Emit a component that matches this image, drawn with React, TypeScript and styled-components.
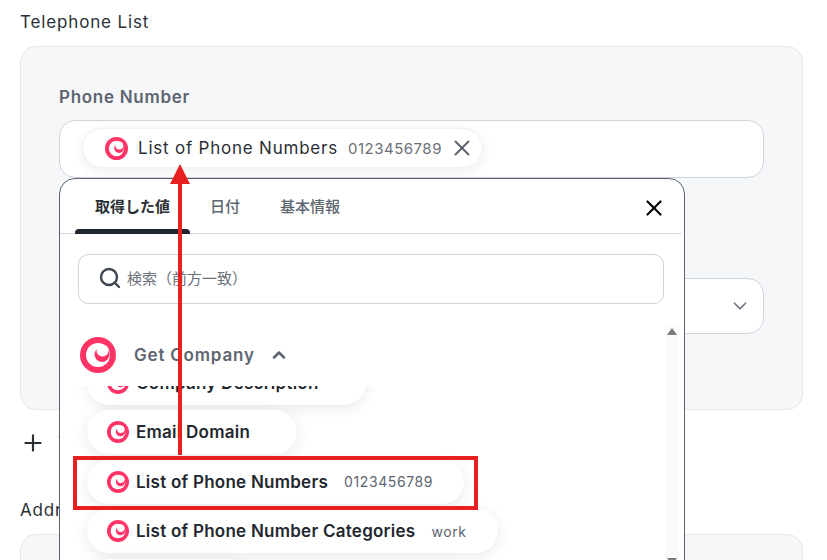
import React from 'react';
import styled, { createGlobalStyle } from 'styled-components';
import { ChevronDown, ChevronUp, Plus, Search, X } from 'lucide-react';

const GlobalStyle = createGlobalStyle`
  html, body {
    margin: 0;
    background: #fff;
  }
  body {
    font-family: Inter, "Noto Sans CJK JP", sans-serif;
    color: #23272e;
  }
  * {
    box-sizing: border-box;
  }
`;

const Page = styled.div`
  position: relative;
  width: 827px;
  height: 560px;
  overflow: hidden;
  padding: 12px 24px 0 20px;
`;

const SectionTitle = styled.div`
  font-size: 17px;
  line-height: 20px;
  letter-spacing: 0.85px;
  color: #2b2f36;
  height: 34px;
`;

const Panel = styled.div<{ $height: number }>`
  height: ${p => p.$height}px;
  background: #f6f7f9;
  border: 1px solid #e5e7eb;
  border-radius: 16px;
  padding: 40px 38px 0;
`;

const FieldLabel = styled.div`
  font-size: 17px;
  font-weight: 600;
  line-height: 20px;
  letter-spacing: 0.7px;
  color: #5d6570;
  height: 33px;
`;

const InputBox = styled.div`
  height: 58px;
  background: #fff;
  border: 1px solid #ced4dc;
  border-radius: 16px;
  padding: 7px 22px;
`;

const SelectBox = styled.div`
  height: 56px;
  margin-top: 100px;
  background: #fff;
  border: 1px solid #ced4dc;
  border-radius: 16px;
  display: flex;
  align-items: center;
  justify-content: flex-end;
  padding-right: 12px;
  color: #6b7078;
`;

const SelectedChip = styled.div`
  display: inline-flex;
  align-items: center;
  height: 40px;
  padding: 0 7px 0 22px;
  background: #fff;
  border: 1px solid #eef0f2;
  border-radius: 20px;
  box-shadow: 0 3px 12px rgba(30, 40, 60, 0.08);
  color: #5d6570;
`;

const SelectedName = styled.span`
  font-size: 17px;
  letter-spacing: 0.78px;
  color: #2b2f36;
  margin: 0 10px 0 10px;
  white-space: nowrap;
`;

const SelectedValue = styled.span`
  font-size: 15px;
  letter-spacing: 0.5px;
  color: #6b7078;
  margin-right: 7px;
`;

const AddRow = styled.div`
  display: flex;
  align-items: center;
  gap: 12px;
  height: 66px;
  margin-bottom: 24px;
  font-size: 17px;
  letter-spacing: 0.85px;
  color: #2b2f36;
`;

const Popup = styled.div`
  position: absolute;
  left: 59px;
  top: 178px;
  width: 626px;
  height: 420px;
  background: #fff;
  border: 1px solid #59626e;
  border-radius: 16px;
  overflow: hidden;
`;

const Tabs = styled.div`
  display: flex;
  align-items: stretch;
  height: 55px;
  margin: 0 2px 0 0;
  padding-left: 15px;
  border-bottom: 1px solid #d6dae0;
`;

const Tab = styled.div<{ $active?: boolean }>`
  position: relative;
  padding: 18px 20px 0;
  font-size: 15px;
  line-height: 20px;
  font-weight: ${p => (p.$active ? 700 : 500)};
  color: ${p => (p.$active ? '#2b2f36' : '#5d6570')};

  &::after {
    content: '';
    display: ${p => (p.$active ? 'block' : 'none')};
    position: absolute;
    left: 0;
    right: 0;
    bottom: -1px;
    height: 5px;
    background: #1f252e;
    border-radius: 4px 4px 0 0;
  }
`;

const CloseButton = styled.div`
  position: absolute;
  right: 17px;
  top: 16px;
  width: 26px;
  height: 26px;
  color: #000;
`;

const SearchBox = styled.div`
  display: flex;
  align-items: center;
  gap: 5px;
  height: 50px;
  margin: 20px 20px 0 18px;
  padding: 0 0 3px 19px;
  border: 1px solid #ced4dc;
  border-radius: 10px;
  font-size: 15px;
  color: #6b7078;
  svg {
    color: #3f4650;
  }
`;

const GroupHeader = styled.div`
  display: flex;
  align-items: center;
  height: 82px;
  padding: 20px 0 0 20px;
  background: #fff;
  font-size: 17px;
  font-weight: 600;
  letter-spacing: 0.8px;
  color: #5d6570;
`;

const GroupName = styled.span`
  margin: 0 14px 0 18px;
`;

const ItemList = styled.div`
  height: 200px;
  overflow: hidden;
  padding-left: 27px;
  display: flex;
  flex-direction: column;
  align-items: flex-start;
  gap: 5.5px;
`;

const ScrolledOff = styled.div`
  margin-top: -25.5px;
`;

const Item = styled.div`
  display: inline-flex;
  align-items: center;
  flex: none;
  height: 44px;
  padding: 0 31px 0 20px;
  background: #fff;
  border-radius: 22px;
  box-shadow: 0 3px 14px rgba(30, 40, 60, 0.1);
  font-size: 17px;
  font-weight: 600;
  letter-spacing: 0.25px;
  color: #23272e;
  white-space: nowrap;
`;

const ItemName = styled.span`
  margin-left: 7px;
`;

const ItemValue = styled.span`
  margin-left: 16px;
  font-size: 14px;
  font-weight: 400;
  letter-spacing: 0.6px;
  color: #5d6570;
`;

const Scrollbar = styled.div`
  position: absolute;
  left: 605px;
  top: 146px;
  width: 14px;
  height: 240px;
  background: #fafafa;
  display: flex;
  flex-direction: column;
  justify-content: space-between;
  align-items: center;
  padding-top: 3px;
`;

const ScrollArrow = styled.div<{ $down?: boolean }>`
  width: 0;
  height: 0;
  border-left: 5px solid transparent;
  border-right: 5px solid transparent;
  ${p => (p.$down ? 'border-top: 7px solid #7d7d7d;' : 'border-bottom: 7px solid #7d7d7d;')}
`;

const Annotation = styled.svg`
  position: absolute;
  left: 0;
  top: 0;
  pointer-events: none;
`;

function Logo({ size }: { size: number }) {
  return (
    <svg width={size} height={size} viewBox="0 0 36 36" style={{ flex: 'none' }}>
      <circle cx="18" cy="18" r="18" fill="#ff3366" />
      <circle cx="18" cy="18" r="12" fill="#fff" />
      <circle cx="22" cy="17.5" r="7.5" fill="#ff3366" />
      <circle cx="22.5" cy="13.5" r="6" fill="#fff" />
    </svg>
  );
}

function CompanyItem({ name, value }: { name: string; value?: string }) {
  return (
    <Item>
      <Logo size={22} />
      <ItemName>{name}</ItemName>
      <ItemValue>{value}</ItemValue>
    </Item>
  );
}

export default function App() {
  return (
    <Page>
      <GlobalStyle />
      <SectionTitle>Telephone List</SectionTitle>
      <Panel $height={364}>
        <FieldLabel>Phone Number</FieldLabel>
        <InputBox>
          <SelectedChip>
            <Logo size={23} />
            <SelectedName>List of Phone Numbers</SelectedName>
            <SelectedValue>0123456789</SelectedValue>
            <X size={26} strokeWidth={1.8} />
          </SelectedChip>
        </InputBox>
        <SelectBox>
          <ChevronDown size={22} strokeWidth={1.8} />
        </SelectBox>
      </Panel>
      <AddRow>
        <Plus size={26} strokeWidth={2} />
        <span>Telephone List</span>
      </AddRow>
      <SectionTitle>Address List</SectionTitle>
      <Panel $height={80} />

      <Popup>
        <Tabs>
          <Tab $active>取得した値</Tab>
          <Tab>日付</Tab>
          <Tab>基本情報</Tab>
        </Tabs>
        <CloseButton>
          <X size={26} strokeWidth={2} />
        </CloseButton>
        <SearchBox>
          <Search size={24} strokeWidth={2.4} />
          <span>検索（前方一致）</span>
        </SearchBox>
        <GroupHeader>
          <Logo size={36} />
          <GroupName>Get Company</GroupName>
          <ChevronUp size={20} strokeWidth={3} />
        </GroupHeader>
        <ItemList>
          <ScrolledOff>
            <CompanyItem name="Company Description" />
          </ScrolledOff>
          <CompanyItem name="Email Domain" />
          <CompanyItem name="List of Phone Numbers" value="0123456789" />
          <CompanyItem name="List of Phone Number Categories" value="work" />
          <CompanyItem name="Website" />
        </ItemList>
        <Scrollbar>
          <ScrollArrow />
          <ScrollArrow $down />
        </Scrollbar>
      </Popup>

      <Annotation width="827" height="560" viewBox="0 0 827 560">
        <rect x="75" y="458" width="401" height="50" fill="none" stroke="#e82020" strokeWidth="4" />
        <rect x="178" y="182" width="4" height="273" fill="#e82020" />
        <polygon points="180,164 170,184 190,184" fill="#e82020" />
      </Annotation>
    </Page>
  );
}
